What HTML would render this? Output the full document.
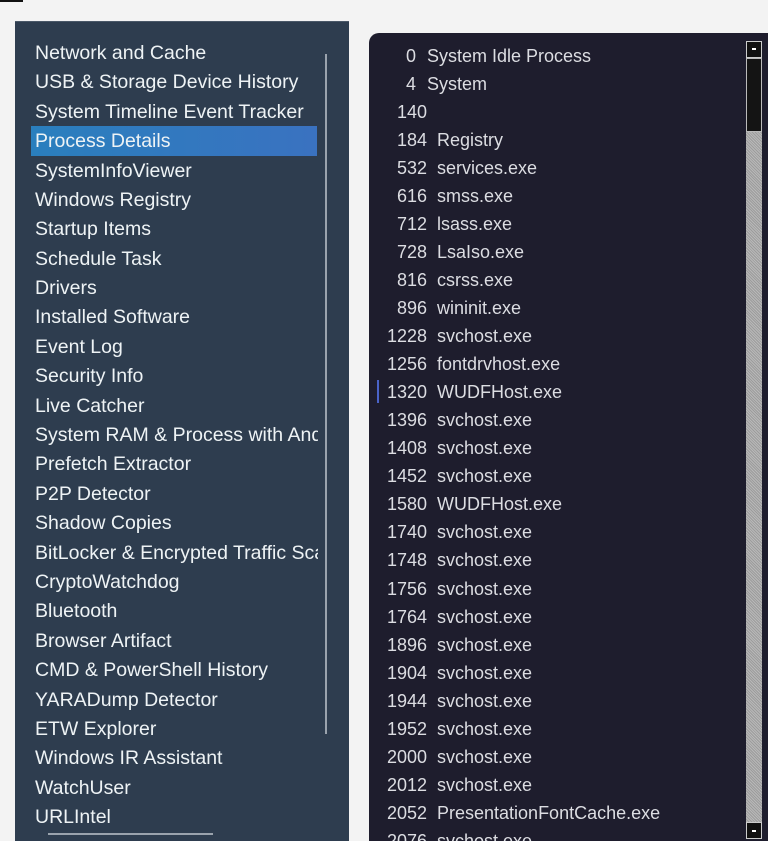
<!DOCTYPE html>
<html style="height:841px;overflow:hidden"><head><style>
body{margin:0;width:768px;height:841px;background:#f3f3f3;position:relative;overflow:hidden;font-family:"Liberation Sans","DejaVu Sans",sans-serif}
.sq{position:absolute;left:0;top:0;width:23px;height:2px;background:#111}
.left{position:absolute;left:15px;top:21px;width:334px;height:820px;background:#2e3d4f;border-top:1px solid #4a5868}
.li{position:absolute;left:20px;font-size:19.5px;color:#eef3f5;white-space:nowrap;width:283px;overflow:hidden;height:29px;line-height:29px}
.sel{position:absolute;left:16px;top:104px;width:286px;height:30px;background:linear-gradient(90deg,#2a7fbe,#3a72c0)}
.vl{position:absolute;left:310px;top:32px;width:2px;height:680px;background:#9aa3ad}
.hl{position:absolute;left:33px;top:811px;width:165px;height:2px;background:#9aa3ad}
.right{position:absolute;left:369px;top:33px;width:420px;height:808px;background:#1e1d2d;border-radius:10px 10px 0 0;overflow:hidden}
.r{position:absolute;font-size:18px;color:#dcdde2;white-space:nowrap;height:28px;line-height:28px}
.n{position:absolute;right:342px;text-align:right}
.nm{position:absolute;left:68px}
.sb{position:absolute;left:746px;top:41px;width:16px;height:800px;background:repeating-linear-gradient(45deg,#b8b8b8 0 1px,#9c9c9c 1px 2px)}
.btn{position:absolute;left:0;width:14px;height:15px;background:#111;border:1px solid #ccc}
.th{position:absolute;left:0;top:17px;width:14px;height:72px;background:#141414;border:1px solid #bbb}
.mark{position:absolute;left:377px;top:380px;width:2px;height:23px;background:#4a63c8}
</style></head><body>
<div class="sq"></div>
<div class="left">
<div class="sel"></div>
<div class="vl"></div><div class="hl"></div>
<div class="li" style="top:17px">Network and Cache</div>
<div class="li" style="top:46px">USB &amp; Storage Device History</div>
<div class="li" style="top:76px">System Timeline Event Tracker</div>
<div class="li" style="top:105px">Process Details</div>
<div class="li" style="top:135px">SystemInfoViewer</div>
<div class="li" style="top:164px">Windows Registry</div>
<div class="li" style="top:193px">Startup Items</div>
<div class="li" style="top:223px">Schedule Task</div>
<div class="li" style="top:252px">Drivers</div>
<div class="li" style="top:281px">Installed Software</div>
<div class="li" style="top:311px">Event Log</div>
<div class="li" style="top:340px">Security Info</div>
<div class="li" style="top:370px">Live Catcher</div>
<div class="li" style="top:399px">System RAM &amp; Process with Android</div>
<div class="li" style="top:428px">Prefetch Extractor</div>
<div class="li" style="top:458px">P2P Detector</div>
<div class="li" style="top:487px">Shadow Copies</div>
<div class="li" style="top:517px">BitLocker &amp; Encrypted Traffic Scanner</div>
<div class="li" style="top:546px">CryptoWatchdog</div>
<div class="li" style="top:575px">Bluetooth</div>
<div class="li" style="top:605px">Browser Artifact</div>
<div class="li" style="top:634px">CMD &amp; PowerShell History</div>
<div class="li" style="top:664px">YARADump Detector</div>
<div class="li" style="top:693px">ETW Explorer</div>
<div class="li" style="top:722px">Windows IR Assistant</div>
<div class="li" style="top:752px">WatchUser</div>
<div class="li" style="top:781px">URLIntel</div>
</div>
<div class="right">
<div class="r" style="top:9px;left:0;width:400px"><span class="n" style="right:353px">0</span><span class="nm" style="left:58px">System Idle Process</span></div>
<div class="r" style="top:37px;left:0;width:400px"><span class="n" style="right:353px">4</span><span class="nm" style="left:58px">System</span></div>
<div class="r" style="top:65px;left:0;width:400px"><span class="n">140</span></div>
<div class="r" style="top:93px;left:0;width:400px"><span class="n">184</span><span class="nm">Registry</span></div>
<div class="r" style="top:121px;left:0;width:400px"><span class="n">532</span><span class="nm">services.exe</span></div>
<div class="r" style="top:149px;left:0;width:400px"><span class="n">616</span><span class="nm">smss.exe</span></div>
<div class="r" style="top:177px;left:0;width:400px"><span class="n">712</span><span class="nm">lsass.exe</span></div>
<div class="r" style="top:205px;left:0;width:400px"><span class="n">728</span><span class="nm">LsaIso.exe</span></div>
<div class="r" style="top:233px;left:0;width:400px"><span class="n">816</span><span class="nm">csrss.exe</span></div>
<div class="r" style="top:261px;left:0;width:400px"><span class="n">896</span><span class="nm">wininit.exe</span></div>
<div class="r" style="top:289px;left:0;width:400px"><span class="n">1228</span><span class="nm">svchost.exe</span></div>
<div class="r" style="top:317px;left:0;width:400px"><span class="n">1256</span><span class="nm">fontdrvhost.exe</span></div>
<div class="r" style="top:345px;left:0;width:400px"><span class="n">1320</span><span class="nm">WUDFHost.exe</span></div>
<div class="r" style="top:373px;left:0;width:400px"><span class="n">1396</span><span class="nm">svchost.exe</span></div>
<div class="r" style="top:401px;left:0;width:400px"><span class="n">1408</span><span class="nm">svchost.exe</span></div>
<div class="r" style="top:429px;left:0;width:400px"><span class="n">1452</span><span class="nm">svchost.exe</span></div>
<div class="r" style="top:457px;left:0;width:400px"><span class="n">1580</span><span class="nm">WUDFHost.exe</span></div>
<div class="r" style="top:485px;left:0;width:400px"><span class="n">1740</span><span class="nm">svchost.exe</span></div>
<div class="r" style="top:513px;left:0;width:400px"><span class="n">1748</span><span class="nm">svchost.exe</span></div>
<div class="r" style="top:542px;left:0;width:400px"><span class="n">1756</span><span class="nm">svchost.exe</span></div>
<div class="r" style="top:570px;left:0;width:400px"><span class="n">1764</span><span class="nm">svchost.exe</span></div>
<div class="r" style="top:598px;left:0;width:400px"><span class="n">1896</span><span class="nm">svchost.exe</span></div>
<div class="r" style="top:626px;left:0;width:400px"><span class="n">1904</span><span class="nm">svchost.exe</span></div>
<div class="r" style="top:654px;left:0;width:400px"><span class="n">1944</span><span class="nm">svchost.exe</span></div>
<div class="r" style="top:682px;left:0;width:400px"><span class="n">1952</span><span class="nm">svchost.exe</span></div>
<div class="r" style="top:710px;left:0;width:400px"><span class="n">2000</span><span class="nm">svchost.exe</span></div>
<div class="r" style="top:738px;left:0;width:400px"><span class="n">2012</span><span class="nm">svchost.exe</span></div>
<div class="r" style="top:766px;left:0;width:400px"><span class="n">2052</span><span class="nm">PresentationFontCache.exe</span></div>
<div class="r" style="top:794px;left:0;width:400px"><span class="n">2076</span><span class="nm">svchost.exe</span></div>
</div>
<div class="mark"></div>
<div class="sb" style="height:797px">
<div class="btn" style="top:0"><div style="position:absolute;left:5px;top:6px;width:4px;height:2px;background:#fff"></div></div>
<div class="th"></div>
<div class="btn" style="top:781px"><div style="position:absolute;left:5px;top:7px;width:4px;height:2px;background:#fff"></div></div>
</div>
</body></html>
